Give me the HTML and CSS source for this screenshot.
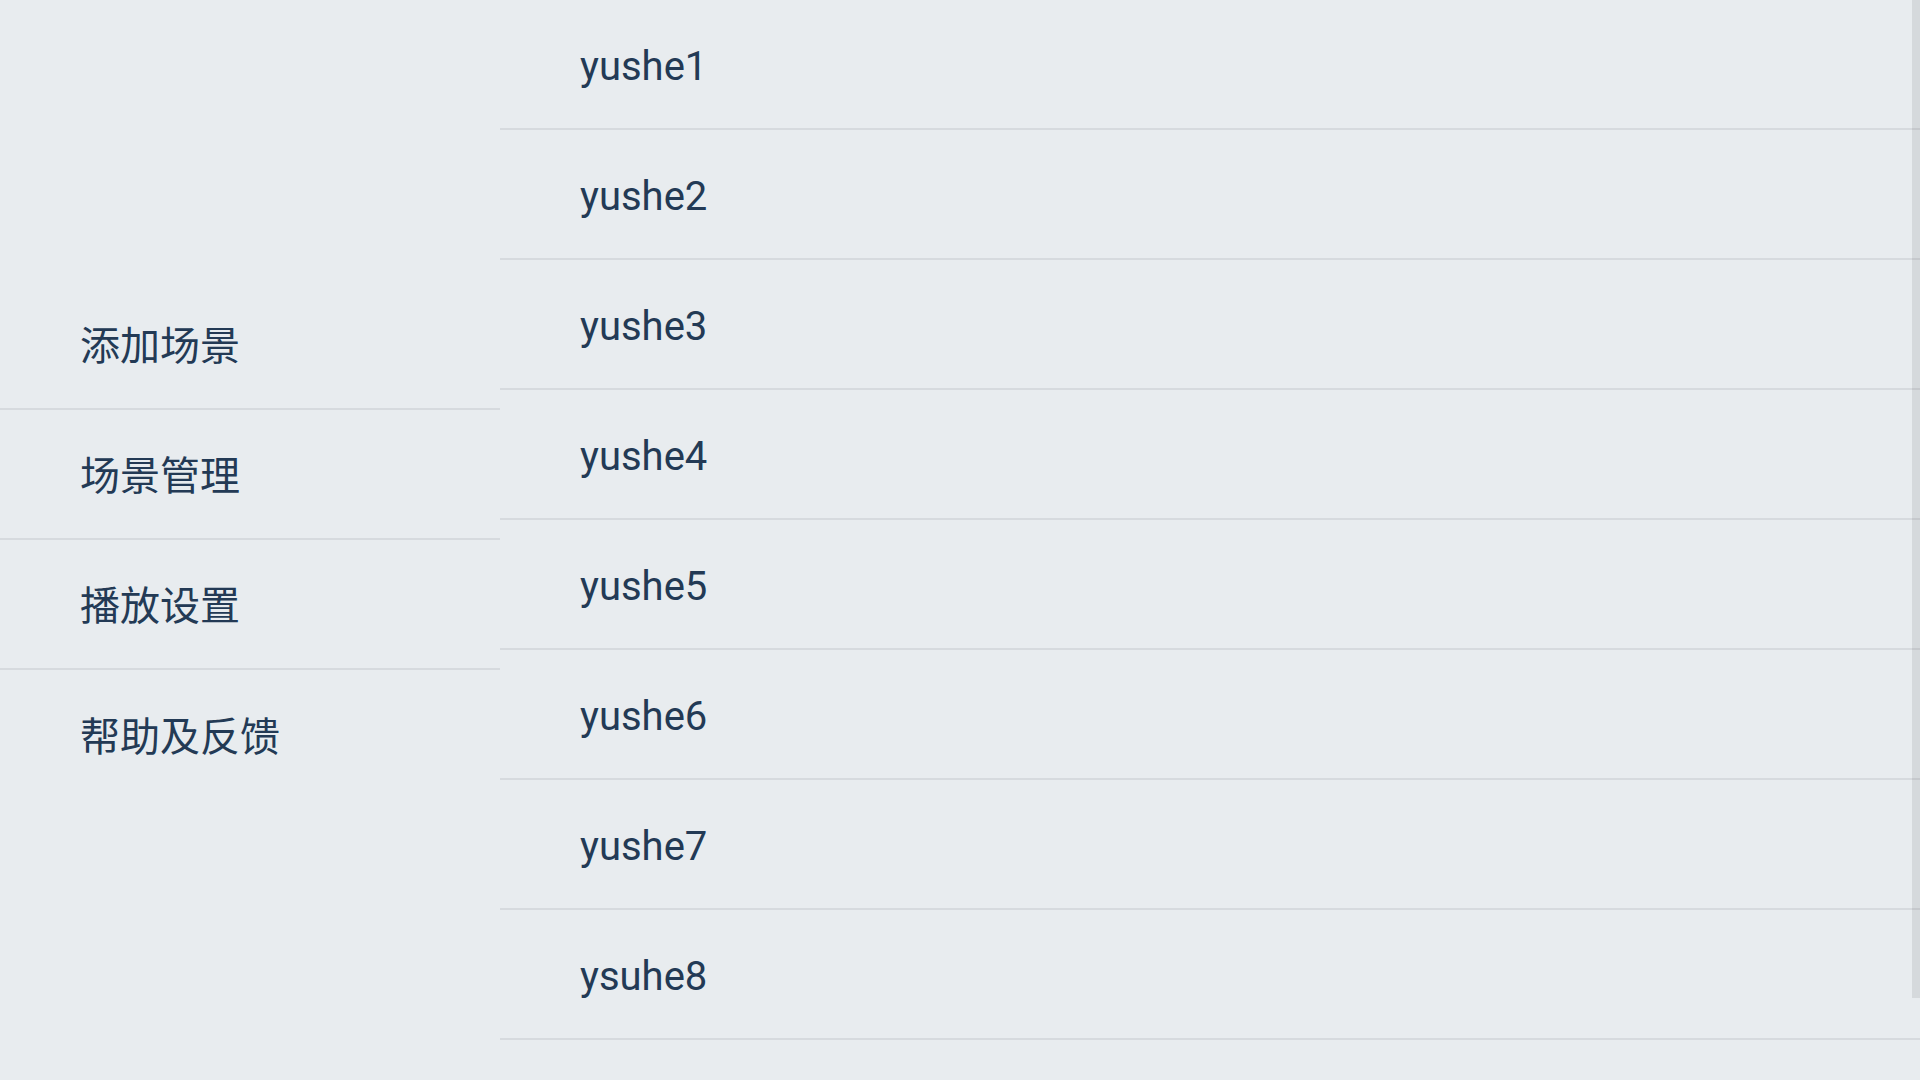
FILE: index.html
```html
<!DOCTYPE html>
<html lang="zh-CN">
<head>
<meta charset="utf-8">
<title>场景</title>
<link rel="stylesheet" href="styles.css">
</head>
<body>
<div class="app">
  <nav class="menu">
    <div class="menu-item">添加场景</div>
    <div class="menu-item">场景管理</div>
    <div class="menu-item">播放设置</div>
    <div class="menu-item">帮助及反馈</div>
  </nav>
  <main class="list">
    <div class="row">yushe1</div>
    <div class="row">yushe2</div>
    <div class="row">yushe3</div>
    <div class="row">yushe4</div>
    <div class="row">yushe5</div>
    <div class="row">yushe6</div>
    <div class="row">yushe7</div>
    <div class="row">ysuhe8</div>
  </main>
  <div class="scroll-thumb"></div>
</div>
</body>
</html>
```

FILE: styles.css
```css
html, body {
  margin: 0;
  padding: 0;
  background: #e8ecef;
}

body {
  font-family: Roboto, "Noto Sans CJK SC", sans-serif;
  color: #233a55;
}

.app {
  position: relative;
  display: grid;
  grid-template-columns: 500px 1fr;
  height: 1080px;
  overflow: hidden;
}

.menu {
  display: flex;
  flex-direction: column;
  justify-content: center;
}

.menu-item {
  box-sizing: border-box;
  height: 130px;
  display: flex;
  align-items: center;
  padding: 6px 0 0 80px;
  font-size: 40px;
  line-height: 46px;
}

.menu-item:not(:last-child) {
  border-bottom: 2px solid #d6dade;
}

.list {
  display: flex;
  flex-direction: column;
}

.row {
  box-sizing: border-box;
  height: 130px;
  flex: none;
  display: flex;
  align-items: center;
  padding: 6px 0 0 80px;
  font-size: 40px;
  line-height: 46px;
  border-bottom: 2px solid #d6dade;
}

.scroll-thumb {
  position: absolute;
  top: 0;
  right: 0;
  width: 8px;
  height: 998px;
  background: rgba(0, 0, 0, 0.08);
}
```
